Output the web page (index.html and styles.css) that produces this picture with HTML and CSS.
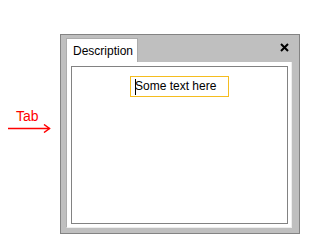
FILE: index.html
```html
<!DOCTYPE html>
<html>
<head>
<meta charset="utf-8">
<link rel="stylesheet" href="styles.css">
</head>
<body>
<div class="stage">
  <div class="note">
    <span class="note-label">Tab</span>
    <svg class="note-arrow" width="43" height="9" viewBox="0 0 43 9">
      <path d="M0 4.5H41.5" stroke="#ff0000" stroke-width="1.5" fill="none"/>
      <path d="M36 0.5L41.5 4.5L36 8.5" stroke="#ff0000" stroke-width="1.5" fill="none"/>
    </svg>
  </div>
  <div class="panel">
    <div class="tabstrip">
      <div class="tab">Description</div>
      <svg class="close" width="9" height="9" viewBox="0 0 9 9">
        <path d="M1 1L8 8M8 1L1 8" stroke="#000" stroke-width="2" fill="none"/>
      </svg>
    </div>
    <div class="content">
      <div class="inner">
        <div class="textbox"><span class="caret"></span>Some text here</div>
      </div>
    </div>
  </div>
</div>
</body>
</html>
```
FILE: styles.css
```css
html, body {
  margin: 0;
  padding: 0;
  background: #ffffff;
}
body {
  font-family: "Liberation Sans", Arial, sans-serif;
  font-size: 12px;
  color: #000;
}
.stage {
  display: flex;
  align-items: flex-start;
  padding: 34px 0 0 8px;
}
.note {
  width: 52px;
  margin-top: 74px;
  display: flex;
  flex-direction: column;
  align-items: flex-start;
}
.note-label {
  color: #ff0000;
  font-size: 14px;
  line-height: 16px;
  margin-left: 8px;
}
.note-arrow {
  display: block;
}
.panel {
  width: 240px;
  height: 200px;
  box-sizing: border-box;
  background: #bfbfbf;
  border: 1px solid #838383;
  padding: 3px 7px 5px 5px;
  display: flex;
  flex-direction: column;
}
.tabstrip {
  display: flex;
  align-items: center;
  justify-content: space-between;
  height: 24px;
}
.tab {
  height: 24px;
  box-sizing: border-box;
  width: 72px;
  background: #ffffff;
  border: 1px solid #acacac;
  border-bottom: none;
  padding: 4px 0 0 6px;
  line-height: 16px;
  align-self: flex-end;
}
.close {
  margin-right: 3px;
  margin-top: -6px;
}
.content {
  flex: 1;
  background: #ffffff;
  border-left: 1px solid #acacac;
  border-right: 1px solid #eeeeee;
  border-bottom: 1px solid #eeeeee;
  padding: 4px 3px 3px 4px;
  display: flex;
}
.inner {
  flex: 1;
  border: 1px solid #828282;
  display: flex;
  justify-content: center;
  align-items: flex-start;
  padding-top: 8px;
}
.textbox {
  width: 101px;
  height: 23px;
  box-sizing: border-box;
  border: 1px solid transparent;
  box-shadow: inset 0 0 0 1px #f5bd1f;
  background: #ffffff;
  line-height: 20px;
  padding-left: 5px;
  position: relative;
  white-space: nowrap;
}
.caret {
  position: absolute;
  left: 5px;
  top: 3px;
  width: 1px;
  height: 16px;
  background: #000;
}
```
